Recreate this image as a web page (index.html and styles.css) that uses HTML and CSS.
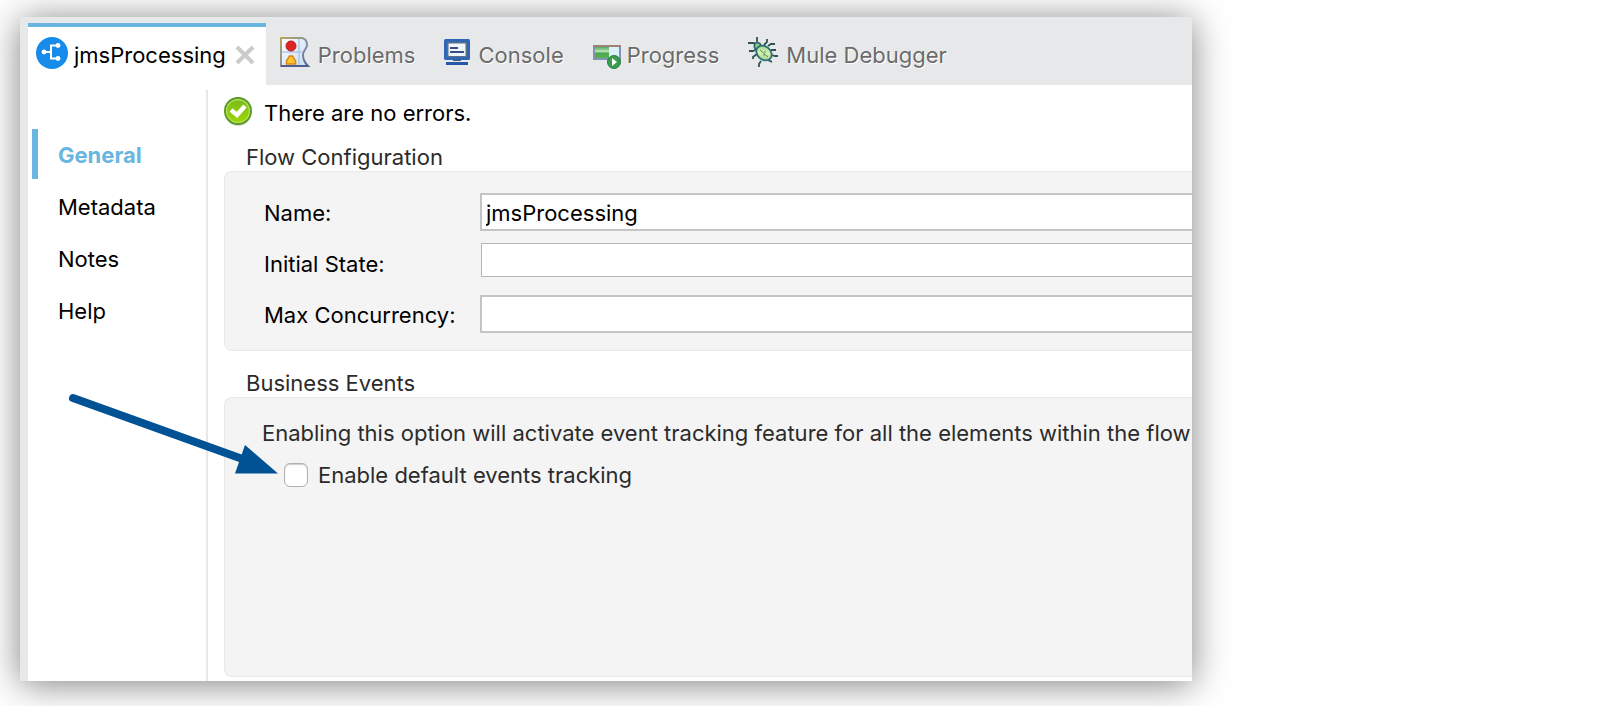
FILE: index.html
```html
<!DOCTYPE html>
<html lang="en">

<head>
    <meta charset="UTF-8">
    <title>jmsProcessing</title>
    <link rel="stylesheet" href="styles.css">
</head>

<body>

    <div class="window">
        <div class="tabs" role="tablist">
            <button class="tab active" role="tab" aria-selected="true">
                <svg width="32" height="32" viewBox="0 0 32 32">
                    <circle cx="16" cy="16" r="16" fill="#178bea" />
                    <g fill="none" stroke="#fff" stroke-width="2">
                        <path d="M8 15h7M22 8.500h-7v13h7" />
                    </g>
                    <g fill="#fff">
                        <circle cx="8" cy="15" r="2.400" />
                        <circle cx="22" cy="8.500" r="2.400" />
                        <circle cx="22" cy="21.500" r="2.400" />
                    </g>
                </svg>
                <span>jmsProcessing</span>
                <svg class="close" width="20" height="20" viewBox="0 0 20 20">
                    <path d="M2 2l16 16M18 2L2 18" stroke="#cbcbcb" stroke-width="4" />
                </svg>
            </button>
            <button class="tab" role="tab">
                <svg width="30" height="30" viewBox="0 0 30 30">
                    <defs>
                        <linearGradient id="sheet" x1="0" y1="0" x2="1" y2="1">
                            <stop offset="0" stop-color="#fdfefe" />
                            <stop offset="1" stop-color="#c3dcf5" />
                        </linearGradient>
                        <linearGradient id="sheetEdge" x1="0" y1="0" x2="1" y2="1">
                            <stop offset="0" stop-color="#b9a45c" />
                            <stop offset="0.600" stop-color="#7f8fa8" />
                            <stop offset="1" stop-color="#4f618b" />
                        </linearGradient>
                    </defs>
                    <path d="M1 1h21q5 1 5 7c0 4-4 5-4 10 0 5 2 8 5 11H1z" fill="url(#sheet)" stroke="url(#sheetEdge)" stroke-width="2" />
                    <path d="M19 2v26M2 15h21" stroke="#b4c6e3" stroke-width="1.500" />
                    <path d="M1 29h27" stroke="#4f618b" stroke-width="2" />
                    <circle cx="11" cy="9" r="5" fill="#e02424" stroke="#b81d25" />
                    <path d="M6.500 27v-3l3-5h3l3 5v3z" fill="#ffc62e" stroke="#dc8614" stroke-width="1.500" />
                </svg>
                <span>Problems</span>
            </button>
            <button class="tab" role="tab">
                <svg width="26" height="26" viewBox="0 0 26 26">
                    <rect width="26" height="21" rx="1.500" fill="#2f67b5" />
                    <rect x="3" y="3" width="20" height="15" fill="#5c6f87" />
                    <rect x="4.500" y="4.500" width="17" height="12.500" fill="#eef8fc" />
                    <path d="M6 9h8M6 13h14" stroke="#3c4a86" stroke-width="2" />
                    <path d="M9 20h8v2h-8z" fill="#3c5f97" />
                    <path d="M2 24.500h22" stroke="#2458a8" stroke-width="3" />
                </svg>
                <span>Console</span>
            </button>
            <button class="tab low" role="tab">
                <svg width="28" height="24" viewBox="0 0 28 24">
                    <defs>
                        <linearGradient id="bar" x1="0" y1="0" x2="0" y2="1">
                            <stop offset="0" stop-color="#4ca85b" />
                            <stop offset="0.400" stop-color="#bfe6b9" />
                            <stop offset="0.550" stop-color="#4aa94f" />
                            <stop offset="1" stop-color="#57ae56" />
                        </linearGradient>
                    </defs>
                    <rect x="1" y="1" width="26" height="13" fill="#ddeffa" stroke="#7f94b0" stroke-width="2" />
                    <path d="M0 1h28" stroke="#9c8373" stroke-width="2" />
                    <rect x="2" y="2" width="14" height="11" fill="url(#bar)" />
                    <circle cx="21" cy="17" r="6.500" fill="#3a9d4c" stroke="#267d43" />
                    <path d="M19 13l5 4-5 4z" fill="#fff" />
                </svg>
                <span>Progress</span>
            </button>
            <button class="tab" role="tab">
                <svg width="30" height="30" viewBox="0 0 30 30">
                    <defs>
                        <linearGradient id="shell" x1="0" y1="0" x2="1" y2="1">
                            <stop offset="0" stop-color="#8cc98c" />
                            <stop offset="0.500" stop-color="#d9f0ae" />
                            <stop offset="1" stop-color="#8cc680" />
                        </linearGradient>
                    </defs>
                    <g fill="none" stroke="#2f5450" stroke-width="1.800">
                        <path d="M9 0v5M0 6h6l2 2M19 2v3l-3 3M1 14h4l4-2M5 22v-2l4-3M11 30v-3l2-3M20 9l3-2h4M23 13h5M23 18l4 1h3M20 23l4 2" />
                    </g>
                    <circle cx="9.500" cy="9" r="3.200" fill="#8fcf86" stroke="#28636b" stroke-width="1.600" />
                    <ellipse cx="16" cy="16" rx="8.400" ry="6.600" transform="rotate(42 16 16)" fill="url(#shell)" stroke="#28717b" stroke-width="1.800" />
                    <path d="M12 13l8 7M15 18h2M17 14v2" stroke="#4f9560" fill="none" />
                </svg>
                <span>Mule Debugger</span>
            </button>
        </div>

        <div class="content">
            <nav class="sidebar">
                <a class="item selected" href="#general">General</a>
                <a class="item" href="#metadata">Metadata</a>
                <a class="item" href="#notes">Notes</a>
                <a class="item" href="#help">Help</a>
            </nav>

            <main class="main" id="general">
                <div class="status">
                    <svg width="28" height="30" viewBox="0 0 28 30">
                        <defs>
                            <linearGradient id="ok" x1="0" y1="0" x2="0" y2="1">
                                <stop offset="0" stop-color="#79b91f" />
                                <stop offset="1" stop-color="#a0d800" />
                            </linearGradient>
                        </defs>
                        <ellipse cx="14" cy="16" rx="13" ry="13" fill="#cfd3c9" />
                        <circle cx="14" cy="14" r="13" fill="url(#ok)" stroke="#5a9a22" stroke-width="2" />
                        <circle cx="14" cy="14" r="11.400" fill="none" stroke="#b7df68" stroke-width="1.200" />
                        <path d="M7 13l6 5 8-9" fill="none" stroke="#fff" stroke-width="4.500" />
                    </svg>
                    <span>There are no errors.</span>
                </div>

                <h2>Flow Configuration</h2>
                <div class="group">
                    <div class="row">
                        <label for="name">Name:</label>
                        <input type="text" id="name" value="jmsProcessing">
                    </div>
                    <div class="row">
                        <label for="state">Initial State:</label>
                        <select id="state">
                            <option></option>
                        </select>
                    </div>
                    <div class="row">
                        <label for="concurrency">Max Concurrency:</label>
                        <input type="text" id="concurrency">
                    </div>
                </div>

                <h2>Business Events</h2>
                <div class="group events">
                    <p>Enabling this option will activate event tracking feature for all the elements within the flow</p>
                    <div class="option">
                        <input type="checkbox" id="tracking">
                        <label for="tracking">Enable default events tracking</label>
                    </div>
                </div>
            </main>
        </div>

        <svg class="arrow" width="220" height="100" viewBox="0 0 220 100">
            <path d="M13 18l175 63" stroke="#005295" stroke-width="8" stroke-linecap="round" />
            <path d="M185 65l33 28.500h-43z" fill="#005295" />
        </svg>
    </div>

</body>

</html>
```
FILE: styles.css
```css
* {
    box-sizing: border-box;
}

body {
    font-family: Inter, sans-serif;
    font-size: 22px;
    line-height: 26px;
    color: #000;
    background: #fff;
    margin: 0;
    padding: 17px 20px 25px;
    min-height: 100vh;
    display: flex;
    overflow: hidden;
}

button,
input,
select {
    font: inherit;
    color: inherit;
}

.window {
    position: relative;
    display: flex;
    flex-direction: column;
    width: 100%;
    max-width: 1172px;
    background: #fff;
    border-left: 8px solid #e7e8ea;
    box-shadow: 0 3px 34px rgba(0, 0, 0, 0.5);
}

.tabs {
    display: flex;
    gap: 29px;
    padding-top: 6px;
    background: #e7e8ea;
}

.tab {
    display: flex;
    align-items: center;
    gap: 8px;
    height: 62px;
    padding: 0 0 4px;
    border: 0;
    background: none;
    color: #6b6b6b;
    text-shadow: 1px 1px 0 #fff;
    white-space: nowrap;
}

.tab span {
    padding-top: 6px;
}

.tab.active {
    gap: 6px;
    margin-right: -15px;
    padding: 0 11px 6px 8px;
    border-top: 4px solid #69b6e1;
    background: #fff;
    color: #000;
    text-shadow: none;
}

.tab.active span {
    padding-top: 4px;
}

.tab .close {
    margin: 4px 0 0 3px;
}

.tab.low {
    gap: 6px;
}

.tab.low svg {
    margin-top: 10px;
}

.content {
    flex: 1;
    display: flex;
}

.sidebar {
    flex: none;
    width: 180px;
    margin-top: 5px;
    padding: 39px 0 0 4px;
    border-right: 2px solid #e7e8ea;
    display: flex;
    flex-direction: column;
    gap: 2px;
}

.item {
    height: 50px;
    line-height: 52px;
    padding-left: 20px;
    border-left: 6px solid transparent;
    color: #000;
    text-decoration: none;
}

.item.selected {
    border-color: #69b6e1;
    color: #69b6e1;
    font-weight: bold;
}

.main {
    flex: 1;
    min-width: 0;
    display: flex;
    flex-direction: column;
    padding: 12px 0 4px 16px;
    overflow: hidden;
}

.status {
    display: flex;
    align-items: center;
    gap: 12px;
    height: 32px;
}

.status svg {
    margin-bottom: 2px;
}

h2 {
    margin: 15px 0 1px 22px;
    font-size: 22px;
    font-weight: normal;
    color: #2b2b2b;
}

.group {
    display: flex;
    flex-direction: column;
    gap: 12px;
    padding: 21px 0 17px 39px;
    background: #f4f4f4;
    border: 1px solid #e8e8e8;
    border-right: 0;
    border-radius: 8px 0 0 8px;
}

.group + h2 {
    margin-top: 19px;
}

.row {
    display: flex;
    align-items: center;
}

.row label {
    flex: none;
    width: 216px;
    padding-top: 2px;
}

.row input {
    flex: 1;
    min-width: 0;
    height: 38px;
    padding: 2px 4px 0;
    border: 2px solid #c4c4c4;
    border-right: 0;
    background: #fff;
}

.row select {
    appearance: none;
    flex: 1;
    align-self: flex-start;
    min-width: 0;
    height: 34px;
    margin: 0 0 6px 1px;
    border: 1px solid #b5b5b5;
    border-right: 0;
    border-radius: 0;
    background: #fff;
}

.events {
    flex: 1;
    padding: 22px 0 0 37px;
    color: #2b2b2b;
}

.events p {
    margin: 0;
    white-space: nowrap;
    overflow: hidden;
}

.option {
    display: flex;
    align-items: center;
    gap: 10px;
    margin: 4px 0 0 22px;
}

.option input {
    appearance: none;
    width: 24px;
    height: 24px;
    margin: 0;
    border: 1px solid #b0b0b0;
    border-radius: 6px;
    background: #fff;
    box-shadow: inset 0 1px 1px #ccc;
}

.option input:checked {
    background: #69b6e1;
}

.arrow {
    position: absolute;
    left: 32px;
    top: 363px;
    fill: none;
    pointer-events: none;
}
```
